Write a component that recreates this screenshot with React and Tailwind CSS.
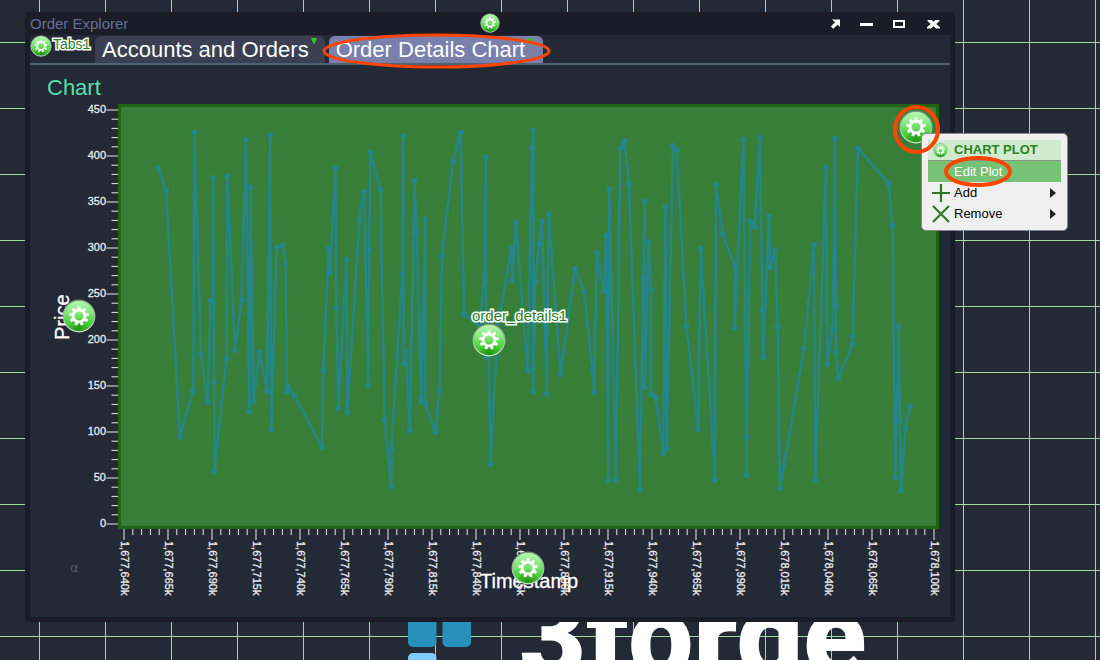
import React from "react";

const POINTS = [
  [114,204],[138,271],[180,1011],[220,872],[223,96],[243,763],[263,908],[272,601],[279,604],[279,234],
  [283,846],[283,1113],[319,776],[322,228],[345,750],[365,598],[378,119],[388,935],[391,261],[401,905],
  [418,756],[441,872],[451,105],[454,988],[470,442],[487,436],[498,492],[500,876],[504,859],[524,888],
  [606,1041],[610,812],[626,445],[630,518],[646,204],[649,624],[655,925],[679,479],[682,938],[718,360],
  [732,274],[745,856],[748,449],[751,158],[781,268],[794,958],[814,1159],[814,1048],[847,522],[850,108],
  [851,792],[857,756],[870,991],[883,241],[890,397],[903,891],[903,905],[916,357],[916,912],[946,997],
  [959,872],[966,468],[999,185],[1022,96],[1032,644],[1076,672],[1094,525],[1098,172],[1098,770],[1105,700],
  [1112,1093],[1132,690],[1174,445],[1177,542],[1187,367],[1223,812],[1236,145],[1240,92],[1240,875],[1240,806],
  [1246,545],[1257,432],[1266,364],[1280,882],[1286,343],[1322,822],[1365,506],[1392,575],[1418,812],[1422,878],
  [1431,459],[1451,572],[1458,406],[1465,1142],[1468,268],[1488,1139],[1501,145],[1514,122],[1527,251],[1560,1169],
  [1570,532],[1574,304],[1574,862],[1586,426],[1593,571],[1593,882],[1607,892],[1630,1060],[1636,320],[1640,1044],
  [1659,138],[1670,149],[1699,677],[1735,988],[1742,446],[1785,1139],[1788,255],[1808,403],[1845,499],[1844,684],
  [1870,119],[1880,1126],[1880,1011],[1891,364],[1904,380],[1920,113],[1927,631],[1930,772],[1947,350],[1950,502],
  [1966,450],[1973,680],[1980,1165],[2052,746],[2082,433],[2086,1139],[2118,202],[2122,793],[2138,687],[2145,116],
  [2148,618],[2148,757],[2155,835],[2198,733],[2198,710],[2214,145],[2306,251],[2317,376],[2326,1132],[2336,680],
  [2340,964],[2343,1172],[2356,985],[2370,918],
];

const X_LABELS = [
  "1,677,640k","1,677,665k","1,677,690k","1,677,715k","1,677,740k","1,677,765k","1,677,790k","1,677,815k","1,677,840k",
  "1,677,865k","1,677,890k","1,677,915k","1,677,940k","1,677,965k","1,677,990k","1,678,015k","1,678,040k","1,678,065k",
];
const Y_LABELS = [450, 400, 350, 300, 250, 200, 150, 100, 50, 0];
const TEETH = [0, 40, 80, 120, 160, 200, 240, 280, 320];

function Gear({ id, className }) {
  return (
    <svg viewBox="0 0 34 34" className={className} aria-hidden="true">
      <defs>
        <linearGradient id={id} x1="0" y1="0" x2="0" y2="1">
          <stop offset="0" stopColor="#b9f7b4" />
          <stop offset="0.35" stopColor="#8cea84" />
          <stop offset="0.7" stopColor="#4fd141" />
          <stop offset="1" stopColor="#35b826" />
        </linearGradient>
        <radialGradient id={id + "-hub"} cx="0.5" cy="0.9" r="0.35">
          <stop offset="0" stopColor="#1d8a12" stopOpacity="0.8" />
          <stop offset="1" stopColor="#1d8a12" stopOpacity="0" />
        </radialGradient>
        <linearGradient id={id + "-rim"} x1="0" y1="0" x2="0" y2="1">
          <stop offset="0" stopColor="#6f8f72" />
          <stop offset="1" stopColor="#d9e8d8" />
        </linearGradient>
      </defs>
      <circle cx="17" cy="17" r="15.8" fill={`url(#${id})`} />
      <circle cx="17" cy="17" r="15.8" fill={`url(#${id}-hub)`} stroke={`url(#${id}-rim)`} strokeWidth="1.2" />
      <circle cx="17" cy="17" r="5.9" fill="none" stroke="#fff" strokeWidth="2.8" />
      {TEETH.map((a) => (
        <path key={a} d="M15.3 10.4 L15.6 7.3 H18.4 L18.7 10.4 Z" fill="#fff" transform={`rotate(${a} 17 17)`} />
      ))}
    </svg>
  );
}

function GearButton({ id, label, className, size }) {
  return (
    <button type="button" aria-label={label} className={className}>
      <Gear id={id} className={size} />
    </button>
  );
}

function Backdrop() {
  return (
    <svg className="pointer-events-none absolute inset-0 h-full w-full" aria-hidden="true">
      <defs>
        <pattern id="desk-grid" x="39" y="42" width="66" height="66" patternUnits="userSpaceOnUse">
          <rect width="1" height="66" fill="#98dd98" />
          <rect width="66" height="1" fill="#98dd98" />
        </pattern>
      </defs>
      <rect width="100%" height="100%" fill="url(#desk-grid)" />
    </svg>
  );
}

function Chart() {
  return (
    <svg viewBox="30 65 920 552" className="block h-full w-full" role="img" aria-label="Price by Timestamp">
      <rect x="119.5" y="105.5" width="818" height="422" fill="#377f39" stroke="#1f6414" strokeWidth="3" />
      <g stroke="#e6e8ea">
        {Array.from({ length: 46 }, (_, i) => (
          <line key={i} x1={i % 5 ? 111.5 : 106.5} x2="118" y1={110 + i * 9.2} y2={110 + i * 9.2} />
        ))}
        {Array.from({ length: 92 }, (_, i) => (
          <line key={i} y1="529" y2={i % 5 === 0 && i < 90 ? 540 : 535} x1={124 + i * 8.8} x2={124 + i * 8.8} />
        ))}
        <line x1="934" x2="934" y1="529" y2="540" />
      </g>
      <g fill="#e6e8ea" fontSize="11" stroke="#e6e8ea" strokeWidth="0.3">
        {Y_LABELS.map((v, i) => (
          <text key={v} x="106" y={113 + i * 46} textAnchor="end">{v}</text>
        ))}
        {X_LABELS.map((v, i) => (
          <text key={v} transform={`translate(${121 + i * 44} 541) rotate(90)`}>{v}</text>
        ))}
        <text transform="translate(931 541) rotate(90)">1,678,100k</text>
      </g>
      <g transform="translate(120 100) scale(0.33333)" stroke="#25858a" fill="#25858a">
        <polyline points={POINTS.map((p) => p.join(",")).join(" ")} fill="none" strokeWidth="7.5" strokeLinejoin="round" />
        {POINTS.map(([x, y], i) => (
          <circle key={i} cx={x} cy={y} r="8.5" stroke="none" />
        ))}
      </g>
      <g fill="#fff" fontSize="20" stroke="#fff" strokeWidth="0.3">
        <text transform="translate(69 340) rotate(-90)">Price</text>
        <text x="480" y="588">Timestamp</text>
      </g>
      <text x="70" y="572" fontSize="13" fontFamily="DejaVu Sans" fill="#565a5c">α</text>
    </svg>
  );
}

function Ring({ className, rx, ry, stroke }) {
  const w = (rx + stroke) * 2;
  const h = (ry + stroke) * 2;
  return (
    <svg viewBox={`0 0 ${w} ${h}`} width={w} height={h} className={"pointer-events-none absolute max-w-none " + className} aria-hidden="true">
      <ellipse cx={w / 2} cy={h / 2} rx={rx} ry={ry} fill="none" stroke="#ff4500" strokeWidth={stroke} />
    </svg>
  );
}

function Tab({ active, children }) {
  return (
    <button
      type="button"
      role="tab"
      aria-selected={active}
      className={
        "relative rounded-t-md pl-[7px] text-[22px] leading-[27px] text-white " +
        (active ? "bg-[#7880ab] pr-[18px]" : "bg-[#3a3f52] pr-4")
      }
    >
      {children}
      <svg viewBox="0 0 6 6" className={"absolute top-0.5 h-1.5 w-1.5 " + (active ? "right-2.5" : "right-2")} aria-hidden="true">
        <path d="M0 0 H6 L3.5 6 H2.5 Z" fill="#3fbf30" />
      </svg>
    </button>
  );
}

function Menu() {
  return (
    <div role="menu" className="absolute top-[121px] left-[calc(100%-34px)] w-[147px] rounded-[5px] border border-[#85878c] bg-[#f0f0f0] p-1.5 text-[13px] text-black">
      <div className="flex h-[21px] items-center gap-1.5 border-b border-[#8b938b] bg-[#d0ebcf] pl-[5px] font-bold text-[#2a8420]">
        <Gear id="gear-menu" className="h-[15px] w-[15px]" />
        CHART PLOT
      </div>
      <button type="button" role="menuitem" className="block h-[21px] w-full bg-[#78c278] pl-[26px] text-left text-white">Edit Plot</button>
      <button type="button" role="menuitem" className="flex h-[21px] w-full items-center gap-1 pr-[5px] pl-1">
        <svg viewBox="0 0 18 18" className="h-[18px] w-[18px]" aria-hidden="true"><path d="M9 0 V18 M0 9 H18" stroke="#2b7a22" strokeWidth="2.2" /></svg>
        <span className="flex-1 text-left">Add</span>
        <svg viewBox="0 0 6 10" className="h-2.5 w-1.5" aria-hidden="true"><path d="M0 0 L6 5 L0 10 Z" fill="#222" /></svg>
      </button>
      <button type="button" role="menuitem" className="flex h-[21px] w-full items-center gap-1 pr-[5px] pl-1">
        <svg viewBox="0 0 18 18" className="h-[18px] w-[18px]" aria-hidden="true"><path d="M1 1 L17 17 M17 1 L1 17" stroke="#2b7a22" strokeWidth="2.2" /></svg>
        <span className="flex-1 text-left">Remove</span>
        <svg viewBox="0 0 6 10" className="h-2.5 w-1.5" aria-hidden="true"><path d="M0 0 L6 5 L0 10 Z" fill="#222" /></svg>
      </button>
      <Ring className="top-[20px] left-[20px]" rx={32} ry={13.5} stroke={4} />
    </div>
  );
}

const outlined = "[paint-order:stroke] [-webkit-text-stroke:3px_white] text-[#2c7d20]";

export default function App() {
  return (
    <div className="relative flex h-screen min-h-[400px] flex-col overflow-hidden bg-[#242936] pt-3 font-['Liberation_Sans',Arial,sans-serif]">
      <Backdrop />
      <section className="relative mr-[145px] ml-[25px] flex min-h-0 flex-1 flex-col bg-[#1a1d27] px-[5px] pb-[5px]">
        <header className="flex h-[23px] items-center justify-between pr-2.5">
          <h1 className="text-[15px] leading-[24px] text-[#666e99]">Order Explorer</h1>
          <div className="flex items-center gap-5">
            <button type="button" aria-label="Pop out">
              <svg viewBox="0 0 10 10" className="block h-2.5 w-2.5" aria-hidden="true"><path d="M2 0.5 H10 V8 L7.6 5.8 L3.2 9.8 L0.8 7.4 L5 3.3 Z" fill="#fff" /></svg>
            </button>
            <button type="button" aria-label="Minimize">
              <svg viewBox="0 0 13 10" className="block h-2.5 w-[13px]" aria-hidden="true"><path d="M0 5.5 H13" stroke="#fff" strokeWidth="3" /></svg>
            </button>
            <button type="button" aria-label="Maximize">
              <svg viewBox="0 0 12 10" className="block h-2.5 w-3" aria-hidden="true"><path d="M1 2 H11 V8 H1 Z" fill="none" stroke="#fff" strokeWidth="2" /></svg>
            </button>
            <button type="button" aria-label="Close" className="pl-0.5">
              <svg viewBox="0 0 13 10" className="block h-2.5 w-[13px]" aria-hidden="true"><path d="M0.5 1 H4.5 L6.5 2.8 L8.5 1 H12.5 V2 L9.3 5 L13 8.2 V9.5 H9 L6.5 7.3 L4 9.5 H0 V8.2 L3.7 5 L0.5 2 Z" fill="#fff" /></svg>
            </button>
          </div>
        </header>

        <nav role="tablist" className="flex h-[30px] items-end border-b-2 border-[#4f6273] bg-[#242936]">
          <div className="flex h-full w-[65px] items-start gap-px">
            <GearButton id="gear-tabs" label="Configure tabs" size="block h-[22px] w-[22px]" />
            <span className={"text-[14px] leading-[18px] " + outlined}>Tabs1</span>
          </div>
          <div className="flex items-end gap-1">
            <Tab>Accounts and Orders</Tab>
            <Tab active>Order Details Chart</Tab>
          </div>
        </nav>

        <main className="relative min-h-0 flex-1 bg-[#242936]">
          <h2 className="absolute top-2.5 left-[17px] text-[22px] leading-[26px] text-[#54dfab]">Chart</h2>
          <Chart />
          <GearButton id="gear-y" label="Configure price axis" className="absolute top-[234px] left-[32px]" size="block h-[34px] w-[34px]" />
          <GearButton id="gear-layer" label="Configure order_details1" className="absolute top-[258px] left-[442px]" size="block h-[34px] w-[34px]" />
          <GearButton id="gear-x" label="Configure timestamp axis" className="absolute top-[486px] left-[481px]" size="block h-[34px] w-[34px]" />
          <GearButton id="gear-plot" label="Configure plot" className="absolute top-[45px] right-[17px]" size="block h-[34px] w-[34px]" />
          <span className={"absolute top-[242px] left-[442px] text-[15px] leading-[18px] " + outlined}>order_details1</span>
        </main>

        <GearButton id="gear-window" label="Configure window" className="absolute top-[1px] left-1/2 -translate-x-1/2" size="block h-5 w-5" />
        <Ring className="top-[20px] left-[296px]" rx={112.5} ry={16} stroke={3} />
        <Menu />
        <Ring className="top-[91px] right-[13px]" rx={21.5} ry={22.5} stroke={4} />
      </section>

      <footer className="relative flex h-[38px] shrink-0 items-start gap-12 overflow-hidden pl-[408px]">
        <svg viewBox="0 0 63 38" className="h-[38px] w-[63px] shrink-0" aria-hidden="true">
          <rect x="0" y="-6" width="28.5" height="31" rx="5" fill="#2790bb" />
          <rect x="34.5" y="-6" width="28.5" height="31" rx="5" fill="#2790bb" />
          <rect x="0" y="31" width="28.5" height="31" rx="5" fill="#7fccfb" />
        </svg>
        <span className="-mt-[42px] font-[Roboto,sans-serif] text-[116px] leading-[112px] font-black text-white">3forge</span>
      </footer>
    </div>
  );
}
